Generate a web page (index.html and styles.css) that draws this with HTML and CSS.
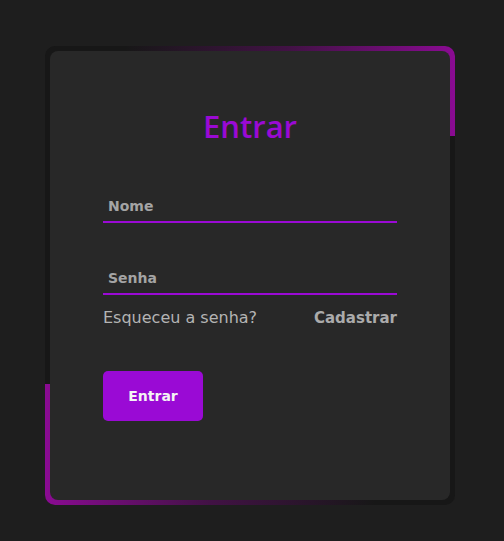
FILE: index.html
```html
<!DOCTYPE html>
<html lang="pt">
<head>
<meta charset="utf-8">
<title>Entrar</title>
<link rel="stylesheet" href="styles.css">
</head>
<body>
  <div class="frame">
    <form class="card">
      <h2 class="title">Entrar</h2>
      <div class="field field-first">
        <span class="label">Nome</span>
        <i class="line"></i>
      </div>
      <div class="field">
        <span class="label">Senha</span>
        <i class="line"></i>
      </div>
      <div class="links">
        <a class="forgot">Esqueceu a senha?</a>
        <a class="signup">Cadastrar</a>
      </div>
      <button type="button" class="submit">Entrar</button>
    </form>
  </div>
</body>
</html>
```
FILE: styles.css
```css
* { box-sizing: border-box; }
html, body { height: 100%; }
body {
  margin: 0;
  padding: 46px 0 0 45px;
  background: #1e1e1e;
  font-family: "DejaVu Sans", "Open Sans", sans-serif;
}
.frame {
  position: relative;
  width: 410px;
  height: 459px;
  padding: 5px;
  background: #171717;
  border-radius: 10px;
  overflow: hidden;
  display: flex;
}
.frame::before,
.frame::after {
  content: "";
  position: absolute;
}
.frame::before {
  top: 0;
  right: 0;
  width: 330px;
  height: 90px;
  background: linear-gradient(90deg, rgba(130, 10, 138, 0) 0%, rgba(130, 10, 138, 0.4) 50%, #8a0b92 100%);
}
.frame::after {
  bottom: 0;
  left: 0;
  width: 330px;
  height: 121px;
  background: linear-gradient(270deg, rgba(130, 10, 138, 0) 0%, rgba(130, 10, 138, 0.4) 50%, #8a0b92 100%);
}
.card {
  position: relative;
  z-index: 1;
  flex: 1;
  margin: 0;
  background: #282828;
  border-radius: 8px;
  padding: 56px 53px 0;
  display: flex;
  flex-direction: column;
}
.title {
  margin: 0;
  font-family: "Open Sans", "DejaVu Sans", sans-serif;
  font-size: 31px;
  line-height: 38px;
  font-weight: 600;
  color: #9a0ad4;
  text-align: center;
}
.field {
  display: flex;
  flex-direction: column;
  margin-top: 45px;
}
.field-first { margin-top: 51px; }
.label {
  padding-left: 5px;
  font-size: 14px;
  line-height: 20px;
  font-weight: 700;
  color: #a4a4a4;
}
.line {
  display: block;
  height: 2px;
  margin-top: 5px;
  background: #9b0ad5;
}
.links {
  display: flex;
  justify-content: space-between;
  align-items: baseline;
  margin-top: 12px;
  line-height: 22px;
}
.forgot {
  font-size: 16px;
  color: #b4b4b4;
}
.signup {
  font-size: 15px;
  font-weight: 700;
  color: #ababab;
}
.submit {
  align-self: flex-start;
  margin-top: 42px;
  width: 100px;
  height: 50px;
  border: none;
  border-radius: 5px;
  background: #9a0ad5;
  color: #f4f4f4;
  font-family: inherit;
  font-size: 14px;
  font-weight: 700;
  padding: 0;
}
```
